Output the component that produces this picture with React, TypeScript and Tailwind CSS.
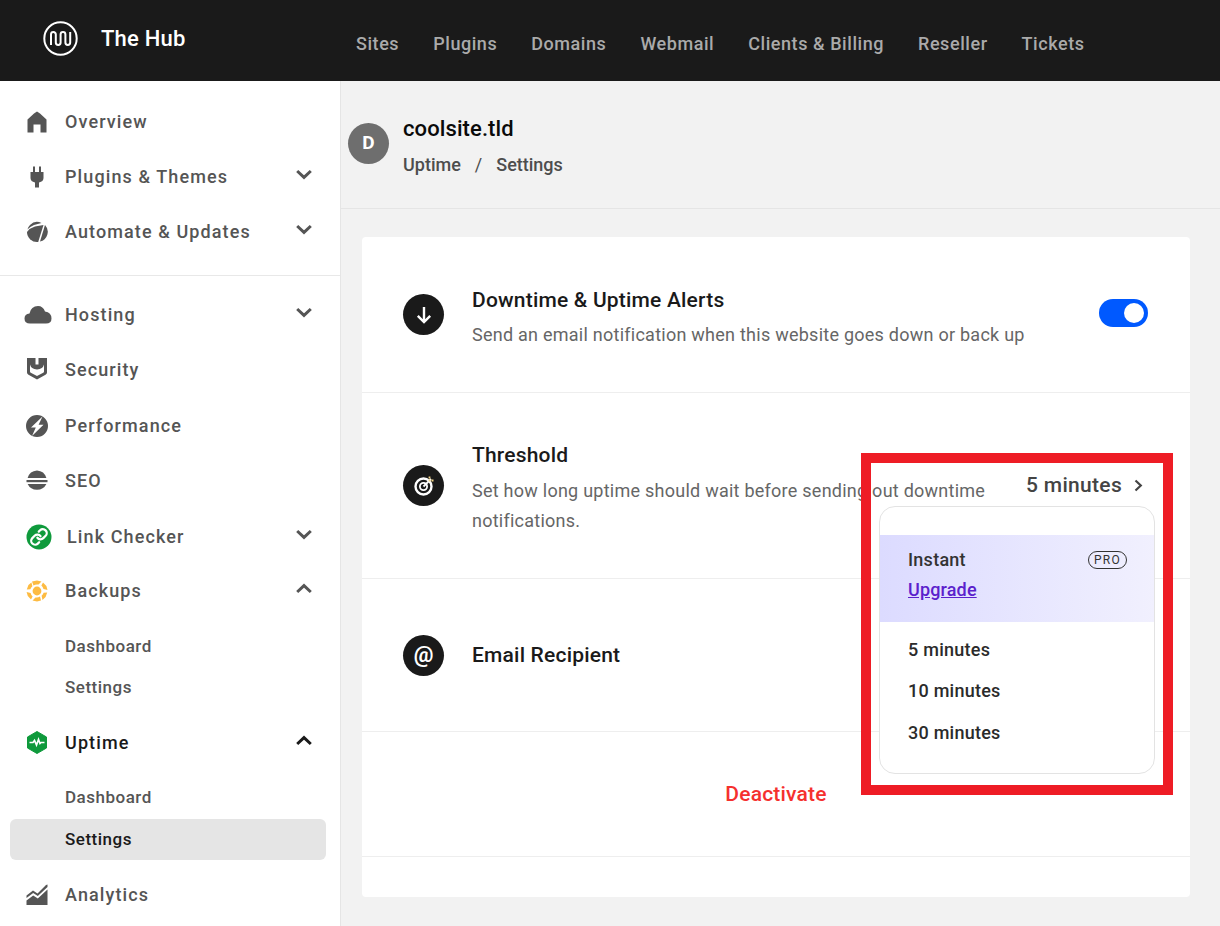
import React from "react";

const Chevron = ({ up, dark }: { up?: boolean; dark?: boolean }) => (
  <svg width="16" height="11" viewBox="0 0 16 11" fill="none" className={dark ? "text-[#1a1a1a]" : "text-[#555555]"}>
    <path d={up ? "M1.2 9 L8 2.6 L14.8 9" : "M1.2 2 L8 8.4 L14.8 2"} stroke="currentColor" strokeWidth="3" />
  </svg>
);

const I = ({ w = 22, h = 22, children }: { w?: number; h?: number; children: React.ReactNode }) => (
  <svg width={w} height={h} viewBox={`0 0 ${w} ${h}`} fill="#555555">{children}</svg>
);

const HomeIcon = () => (
  <I><path d="M11 .5 L14 2.6 L20.5 8.5 V21.5 H14.5 V13.5 H7.5 V21.5 H1.5 V8.5 L8 2.6 Z" /></I>
);
const PlugIcon = () => (
  <I><path d="M7 .5 H9 V6 H13 V.5 H15 V6 H17.5 V12 Q17.5 15.5 13 16.5 V21.5 H9 V16.5 Q4.5 15.5 4.5 12 V6 H7 Z" /></I>
);
const AutomateIcon = () => (
  <I>
    <path d="M4 4 A10 10 0 0 1 15.5 2 L8 4 Q4 5.5 1.4 8.5 A10 10 0 0 1 4 4 Z" />
    <path d="M19 4 A10 10 0 0 1 14 20.6 Z" />
    <path d="M17.5 4 L12.2 21 A10 10 0 0 1 1 11 Q4 7 9 5.6 Z" />
  </I>
);
const CloudIcon = () => (
  <I w={28} h={20}>
    <path d="M6 18.5 Q.5 18.5 .5 13.5 Q.5 9 5.5 8.5 Q7 1 14 1 Q19 1 21 6.5 Q27.5 7.5 27.5 13.5 Q27.5 18.5 22 18.5 Z" />
  </I>
);
const ShieldIcon = () => (
  <I h={24}>
    <path d="M1 1 H9.5 V7.5 H12.5 V1 H21 V15.5 Q21 17 19.5 17.8 L11 22.5 L2.5 17.8 Q1 17 1 15.5 Z" />
    <path d="M4 7.5 Q5 12 11 12.5 Q17 12 18 7.5 V14.5 Q18 15.3 17.2 15.8 L11 19 L4.8 15.8 Q4 15.3 4 14.5 Z" fill="#fff" />
  </I>
);
const PerfIcon = () => (
  <I>
    <path fillRule="evenodd" d="M11 0 A11 11 0 1 1 11 22 A11 11 0 1 1 11 0 Z M16.5 1.5 L5 12.5 H9.8 L6 21 L17.5 9.8 H12.6 Z" />
  </I>
);
const SeoIcon = () => (
  <I>
    <path d="M11 .5 A10.5 10.5 0 0 1 20.4 8 H1.6 A10.5 10.5 0 0 1 11 .5 Z" />
    <rect x="0.5" y="10" width="21" height="2.2" />
    <path d="M1.6 14 H20.4 A10.5 10.5 0 0 1 1.6 14 Z" />
  </I>
);
const LinkIcon = () => (
  <svg width="26" height="26" viewBox="0 0 26 26">
    <circle cx="13" cy="13" r="12.5" fill="#0f9a3c" />
    <g fill="none" stroke="#fff" strokeWidth="2.9" strokeLinecap="round" transform="translate(3.6 3.6) scale(.78)">
      <path d="M10 13a5 5 0 0 0 7.54.54l3-3a5 5 0 0 0-7.07-7.07l-1.72 1.71" />
      <path d="M14 11a5 5 0 0 0-7.54-.54l-3 3a5 5 0 0 0 7.07 7.07l1.71-1.71" />
    </g>
  </svg>
);
const BackupIcon = () => (
  <svg width="22" height="22" viewBox="0 0 22 22" fill="#fdbb42">
    <circle cx="11" cy="11" r="4.4" />
    <path d="M6 1.6 L11 .5 L15.5 1.5 L12.5 4.6 Q9.5 4.2 7.5 5.4 Z" />
    <path d="M17 2.4 L20.4 6 L21.5 10 L17.5 9 Q16.8 6.6 15.4 5.4 Z" />
    <path d="M21.2 12.5 L19.6 17 L16.5 20 L15.6 15.8 Q17.2 14.4 17.6 12.8 Z" />
    <path d="M15 20.6 L11 21.5 L6.5 20.4 L9.5 17.4 Q12 17.8 14 16.6 Z" />
    <path d="M5 19.6 L1.8 16 L.6 12 L4.6 13 Q5.2 15.4 6.6 16.6 Z" />
    <path d="M.8 9.5 L2.4 5 L5.4 2.4 L6.4 6.2 Q4.8 7.6 4.4 9.2 Z" />
  </svg>
);
const UptimeIcon = () => (
  <svg width="22" height="23" viewBox="0 0 22 23">
    <path d="M11 .5 L20.5 6 V17 L11 22.5 L1.5 17 V6 Z" fill="#0f9a3c" stroke="#0f9a3c" strokeLinejoin="round" />
    <path d="M3.5 11.5 H7 L8.5 9.5 L10.5 14 L12.5 8.5 L14 12.5 L15 11.5 H18.5" fill="none" stroke="#fff" strokeWidth="1.7" />
  </svg>
);
const AnalyticsIcon = () => (
  <I>
    <path d="M0.5 11.5 L7 6.5 L11.5 9.5 L20 1 L21.5 .5 V3 L11.8 12 L7.2 9 L.5 14 Z" />
    <path d="M.5 16.5 L7.2 11.5 L11.8 14.5 L21.5 5.5 V21 H.5 Z" />
  </I>
);

const Row = ({
  icon, label, chevron, dark, labelClass, height,
}: {
  icon: React.ReactNode; label: string; chevron?: "up" | "down"; dark?: boolean; labelClass?: string; height?: string;
}) => (
  <div className={`flex items-center pr-[28px] ${height ?? "h-[55px]"}`}>
    <div className="flex w-[65px] shrink-0 justify-center pl-[9px]">{icon}</div>
    <span className={`${labelClass ?? ""} flex-1 text-[18px] font-medium tracking-[1.1px] ${dark ? "text-[#1a1a1a]" : "text-[#555555]"}`}>{label}</span>
    {chevron && <span className="-mt-[5px] flex"><Chevron up={chevron === "up"} dark={dark} /></span>}
  </div>
);

const Sub = ({ label, active }: { label: string; active?: boolean }) => (
  <div className={`ml-[10px] mr-[14px] flex h-[41px] items-center rounded-[6px] pl-[55px] text-[17px] font-medium tracking-[0.5px] ${active ? "bg-[#e5e5e5] text-[#1a1a1a]" : "text-[#555555]"}`}>
    {label}
  </div>
);

const RoundIcon = ({ children }: { children: React.ReactNode }) => (
  <div className="flex h-[41px] w-[41px] shrink-0 items-center justify-center rounded-full bg-[#1a1a1a]">{children}</div>
);

const Nav = () => (
  <div className="flex gap-[34px] text-[18px] font-medium tracking-[0.56px] text-[#aaaaaa]">
    {["Sites", "Plugins", "Domains", "Webmail", "Clients & Billing", "Reseller", "Tickets"].map((n) => (
      <span key={n}>{n}</span>
    ))}
  </div>
);

export default function App() {
  return (
    <div className="flex h-[926px] w-[1220px] flex-col overflow-hidden bg-[#f2f2f2] font-['Roboto',sans-serif]">
      <header className="flex h-[81px] shrink-0 items-center bg-[#1a1a1a]">
        <div className="flex w-[356px] shrink-0 items-center pb-[5px] pl-[43px]">
          <svg width="35" height="35" viewBox="0 0 35 35" fill="none" stroke="#fff">
            <circle cx="17.5" cy="17.5" r="16.2" strokeWidth="2" />
            <path d="M8 24 V13.4 A2.4 2.4 0 0 1 12.8 13.4 V21.6 A2.4 2.4 0 0 0 17.6 21.6 V13.4 A2.4 2.4 0 0 1 22.4 13.4 V21.6 A2.4 2.4 0 0 0 27.2 21.6 V11" strokeWidth="2" />
          </svg>
          <span className="ml-[23px] text-[22px] font-medium tracking-[0.2px] text-white">The Hub</span>
        </div>
        <div className="pt-[6px]"><Nav /></div>
      </header>

      <div className="flex min-h-0 flex-1">
        <aside className="w-[341px] shrink-0 overflow-hidden border-r border-[#e5e5e5] bg-white">
          <div className="border-b border-[#e8e8e8] pb-[16px] pt-[13px]">
            <Row icon={<HomeIcon />} label="Overview" />
            <Row icon={<PlugIcon />} label="Plugins & Themes" chevron="down" />
            <Row icon={<AutomateIcon />} label="Automate & Updates" chevron="down" />
          </div>
          <div className="pt-[11px]">
            <Row icon={<span className="ml-[1px] flex"><CloudIcon /></span>} label="Hosting" chevron="down" />
            <Row icon={<ShieldIcon />} label="Security" height="h-[56px] pb-[2px]" />
            <Row icon={<PerfIcon />} label="Performance" />
            <Row icon={<SeoIcon />} label="SEO" />
            <Row icon={<span className="ml-[3px] flex"><LinkIcon /></span>} label="Link Checker" chevron="down" labelClass="ml-[2px]" height="h-[55px] pt-[2px]" />
            <Row icon={<BackupIcon />} label="Backups" chevron="up" />
            <div className="h-[8px]" />
            <Sub label="Dashboard" />
            <Sub label="Settings" />
            <div className="h-[7px]" />
            <Row icon={<UptimeIcon />} label="Uptime" chevron="up" dark />
            <div className="h-[7px]" />
            <Sub label="Dashboard" />
            <div className="h-[1px]" />
            <Sub label="Settings" active />
            <div className="h-[7px]" />
            <Row icon={<AnalyticsIcon />} label="Analytics" />
          </div>
        </aside>

        <main className="min-w-0 flex-1">
          <div className="flex h-[128px] items-center border-b border-[#e5e5e5] pb-[2px] pl-[7px]">
            <div className="flex h-[41px] w-[41px] items-center justify-center rounded-full bg-[#6e6e6e] text-[19px] font-bold text-white">D</div>
            <div className="ml-[14px] pt-[6px]">
              <div className="text-[22px] font-medium leading-[26px] tracking-[0.1px] text-[#0a0a0a]">coolsite.tld</div>
              <div className="mt-[11px] flex gap-[14px] text-[18px] font-medium leading-[24px] text-[#4d4d4d]">
                <span>Uptime</span>
                <span className="font-normal">/</span>
                <span>Settings</span>
              </div>
            </div>
          </div>

          <div className="ml-[21px] mt-[28px] h-[660px] w-[828px] rounded-[4px] bg-white">
            <section className="flex h-[156px] items-center border-b border-[#eeeeee] pl-[41px] pr-[42px]">
              <RoundIcon>
                <svg width="16" height="18" viewBox="0 0 16 18" fill="none" stroke="#fff" strokeWidth="2.4">
                  <path d="M8 1 V15.5 M1.8 9.8 L8 16 L14.2 9.8" />
                </svg>
              </RoundIcon>
              <div className="ml-[28px] flex-1 pt-[5px]">
                <div className="text-[21px] font-medium leading-[26px] tracking-[0.2px] text-[#1a1a1a]">Downtime & Uptime Alerts</div>
                <div className="mt-[9px] text-[18px] leading-[26px] tracking-[0.25px] text-[#666666]">Send an email notification when this website goes down or back up</div>
              </div>
              <div className="mb-[4px] flex h-[28px] w-[49px] items-center justify-end rounded-full bg-[#0059ff] pr-[4px]">
                <div className="h-[20px] w-[20px] rounded-full bg-white" />
              </div>
            </section>

            <section className="relative flex h-[186px] items-start border-b border-[#eeeeee] pl-[41px] pr-[47px]">
              <div className="mt-[72px]">
                <RoundIcon>
                  <svg width="22" height="22" viewBox="0 0 22 22" fill="none" stroke="#fff">
                    <circle cx="10.5" cy="11.5" r="8" strokeWidth="2.4" />
                    <circle cx="10.5" cy="11.5" r="3.6" strokeWidth="1.8" />
                    <path d="M10.5 11.5 L18 4" strokeWidth="1.8" />
                    <path d="M16.5 1.5 V5.5 H20.5" stroke="#f5d78a" strokeWidth="1.8" strokeDasharray="2 1" />
                  </svg>
                </RoundIcon>
              </div>
              <div className="ml-[28px] mt-[49px] w-[530px]">
                <div className="text-[21px] font-medium leading-[26px] tracking-[0.2px] text-[#1a1a1a]">Threshold</div>
                <div className="mt-[8px] text-[18px] leading-[29.5px] tracking-[0.25px] text-[#666666]">Set how long uptime should wait before sending out downtime notifications.</div>
              </div>
              <div className="ml-auto mt-[79px] flex items-center">
                <span className="text-[21px] font-medium leading-[27px] tracking-[0.3px] text-[#444444]">5 minutes</span>
                <svg className="ml-[12px]" width="9" height="13" viewBox="0 0 9 13" fill="none" stroke="#444444" strokeWidth="2.2">
                  <path d="M1.5 1.5 L6.8 6.5 L1.5 11.5" />
                </svg>
              </div>

              <div className="absolute right-[17px] top-[60px] h-[342px] w-[312px] border-[10px] border-[#ee1c25]" />
              <div className="absolute right-[35px] top-[113px] h-[268px] w-[276px] overflow-hidden rounded-[16px] border border-[#e3e3e3] bg-white pt-[28px]">
                <div className="h-[87px] bg-gradient-to-r from-[#dcdbff] to-[#f1f0fe] pl-[28px] pr-[27px] pt-[12px]">
                  <div className="flex items-center justify-between">
                    <span className="text-[18px] font-medium leading-[26px] tracking-[0.25px] text-[#333333]">Instant</span>
                    <span className="flex h-[18px] w-[39px] items-center justify-center rounded-full border border-[#333333] text-[12px] tracking-[1.2px] text-[#333333]">PRO</span>
                  </div>
                  <a className="mt-[4px] block text-[18px] font-medium leading-[26px] tracking-[0.15px] text-[#5b21cc] underline">Upgrade</a>
                </div>
                <div className="flex flex-col gap-[15.25px] px-[28px] pt-[15px] text-[18px] font-medium leading-[26px] tracking-[0.25px] text-[#2b2b2b]">
                  <span>5 minutes</span>
                  <span>10 minutes</span>
                  <span>30 minutes</span>
                </div>
              </div>
            </section>

            <section className="flex h-[153px] items-center border-b border-[#eeeeee] pl-[41px]">
              <RoundIcon>
                <span className="text-[22px] font-bold leading-none text-white">@</span>
              </RoundIcon>
              <div className="ml-[28px] text-[21px] font-medium leading-[26px] tracking-[0.2px] text-[#1a1a1a]">Email Recipient</div>
            </section>

            <section className="flex h-[125px] items-center justify-center border-b border-[#eeeeee] pt-[2px]">
              <span className="text-[21px] font-medium tracking-[0.2px] text-[#f5302e]">Deactivate</span>
            </section>
          </div>
        </main>
      </div>
    </div>
  );
}
